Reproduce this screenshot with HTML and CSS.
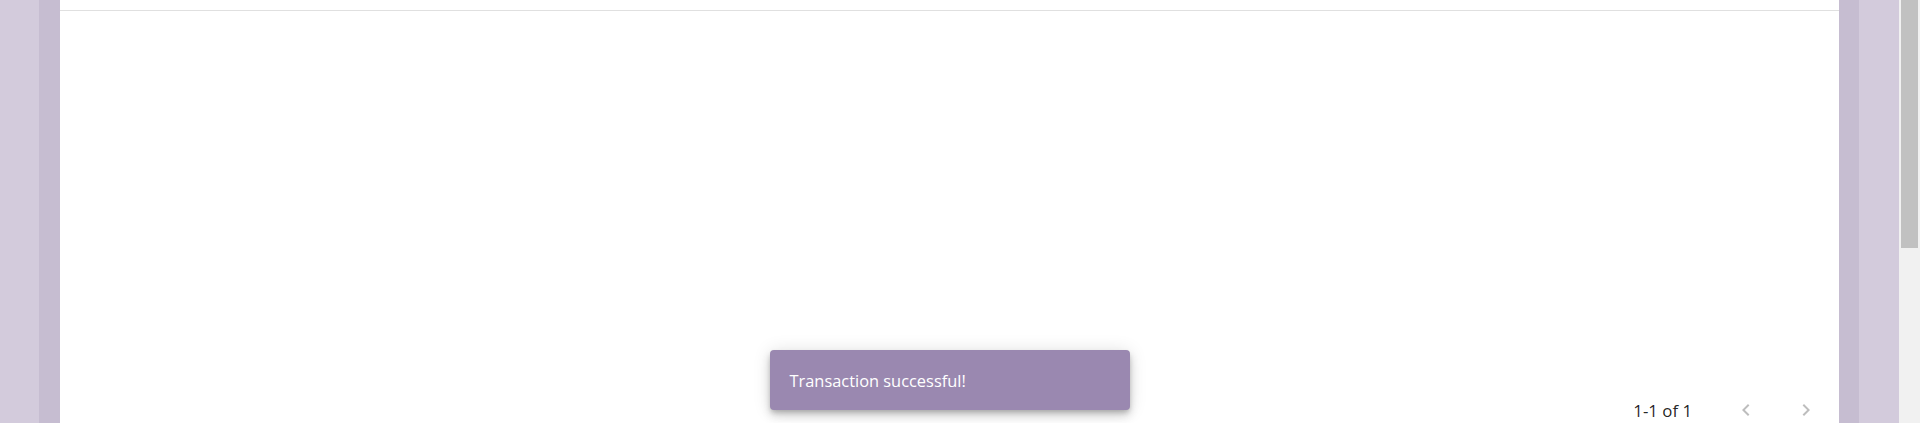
FILE: index.html
```html
<!DOCTYPE html>
<html lang="en">
<head>
<meta charset="utf-8">
<title>Transactions</title>
<link rel="stylesheet" href="styles.css">
</head>
<body>
  <div class="page">
    <div class="frame">
      <div class="card">
        <div class="table-head"></div>
        <div class="table-body"></div>
        <div class="pagination">
          <span class="range">1-1 of 1</span>
          <div class="actions">
            <button class="icon-btn" disabled aria-label="Previous page">
              <svg viewBox="0 0 24 24" width="24" height="24"><path d="M15.41 7.41 14 6l-6 6 6 6 1.41-1.41L10.83 12z"/></svg>
            </button>
            <button class="icon-btn" disabled aria-label="Next page">
              <svg viewBox="0 0 24 24" width="24" height="24"><path d="M10 6 8.59 7.41 13.17 12l-4.58 4.59L10 18l6-6z"/></svg>
            </button>
          </div>
        </div>
      </div>
    </div>
    <div class="snackbar">Transaction successful!</div>
  </div>
  <div class="scrollbar"><div class="thumb"></div></div>
</body>
</html>
```
FILE: styles.css
```css
html, body {
  margin: 0;
  height: 423px;
  overflow: hidden;
}
body {
  display: flex;
  font-family: "Open Sans", "Noto Sans", sans-serif;
}
.page {
  position: relative;
  flex: 1;
  display: flex;
  background: #d3cbdc;
  padding: 0 40px 0 39px;
}
.frame {
  flex: 1;
  display: flex;
  background: #c6bdd1;
  padding: 0 20px 0 21px;
}
.card {
  flex: 1;
  display: flex;
  flex-direction: column;
  background: #ffffff;
}
.table-head {
  flex-shrink: 0;
  height: 10px;
  border-bottom: 1px solid #e0e0e0;
}
.table-body {
  flex-shrink: 0;
  height: 375px;
}
.pagination {
  flex-shrink: 0;
  height: 48px;
  display: flex;
  align-items: center;
  justify-content: flex-end;
  padding-right: 9px;
}
.range {
  font-size: 16.8px;
  color: rgba(0, 0, 0, 0.87);
  margin-right: 30px;
}
.actions {
  display: flex;
  gap: 12px;
}
.icon-btn {
  width: 48px;
  height: 48px;
  padding: 12px;
  border: 0;
  background: transparent;
  display: flex;
  align-items: center;
  justify-content: center;
}
.icon-btn svg {
  fill: rgba(0, 0, 0, 0.26);
  display: block;
}
.snackbar {
  position: absolute;
  left: 50%;
  bottom: 13px;
  transform: translateX(-50%);
  width: 360px;
  height: 60px;
  box-sizing: border-box;
  padding: 0 20px;
  display: flex;
  align-items: center;
  background: #9a88b0;
  color: #ffffff;
  font-size: 16.4px;
  border-radius: 4px;
  box-shadow: 0 3px 5px -1px rgba(0,0,0,0.2), 0 6px 10px 0 rgba(0,0,0,0.14), 0 1px 18px 0 rgba(0,0,0,0.12);
}
.scrollbar {
  width: 21px;
  background: #f1f1f1;
  padding: 0 2px;
  box-sizing: border-box;
}
.thumb {
  height: 248px;
  background: #c1c1c1;
}
```
